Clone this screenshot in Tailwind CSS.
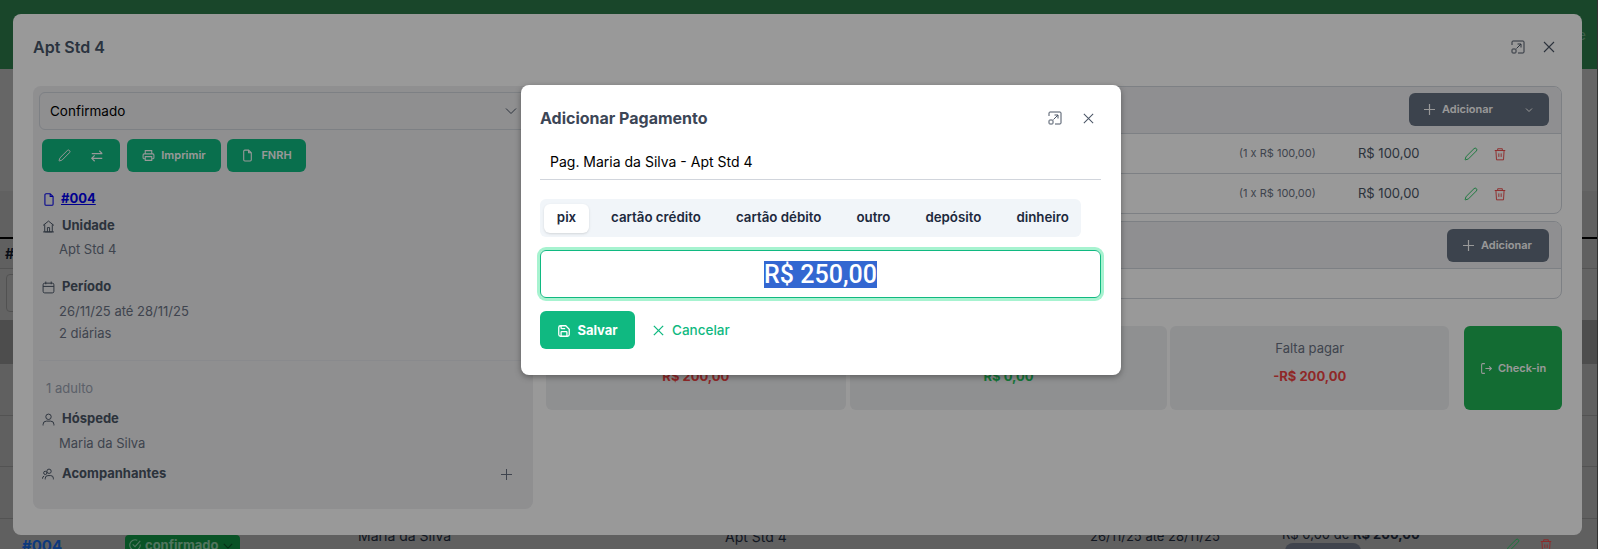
<!DOCTYPE html>
<html lang="pt-BR">
  <head>
    <meta charset="UTF-8">
    <meta name="viewport" content="width=device-width, initial-scale=1.0">
    <script src="https://cdn.jsdelivr.net/npm/@tailwindcss/browser@4"></script>
    <title>Adicionar Pagamento</title>
  </head>
  <body class="h-[549px] overflow-hidden bg-[#aaa] font-['Inter',sans-serif]">
    <!-- página de fundo -->
    <div class="h-[549px] flex flex-col">
      <div class="h-[69px] bg-[#2a7647] flex justify-end items-start pt-[25px] pr-[12px] text-sm text-white/30">Teste</div>
      <div class="h-[122px] bg-[#aaa]"></div>
      <div class="h-[48px] bg-[#a2a2a2] border-b-2 border-black"></div>
      <div class="h-[30px] bg-[#a0a0a0] border-b border-[#8a8a8a] pl-[5px] text-sm font-bold text-gray-900 leading-[30px]">#</div>
      <div class="h-[51px] bg-[#a6a6a6] pl-[6px] pt-[5px]"><div class="w-[30px] h-[38px] rounded border border-[#888]"></div></div>
      <div class="h-[44px] bg-[#808080]"></div>
      <div class="h-[52px] bg-[#a0a0a0] border-b border-[#8a8a8a]"></div>
      <div class="h-[51px] bg-[#a0a0a0] border-b border-[#8a8a8a]"></div>
      <div class="h-[52px] bg-[#a0a0a0] border-b border-[#8a8a8a]"></div>
      <div class="relative flex-1 bg-[#a0a0a0]">
        <a class="absolute left-[22px] top-[16px] text-[15px] font-bold text-[#1660d0]">#004</a>
        <span class="absolute left-[125px] top-[16px] w-[115px] h-[24px] rounded bg-[#0f8a40] pl-[20px] text-[13px] font-bold text-white/50 leading-[21px] flex">
          <svg class="absolute left-[3px] top-[3px] w-[14px] h-[14px]" viewBox="0 0 24 24" fill="none" stroke="currentColor" stroke-width="2"><path d="M21 11v1a9 9 0 1 1-5-8M8 11l4 4 9-10"/></svg>
          confirmado
          <svg class="absolute right-[7px] top-[6px] w-[10px] h-[10px] text-black/40" viewBox="0 0 12 12" fill="none" stroke="currentColor" stroke-width="1.5"><path d="M1 3.5 6 8.5l5-5"/></svg>
        </span>
        <span class="absolute left-[358px] top-[7px] text-sm text-gray-800">Maria da Silva</span>
        <span class="absolute left-[725px] top-[8px] text-sm text-gray-800">Apt Std 4</span>
        <span class="absolute left-[1090px] top-[8px] text-[13px] text-gray-800">26/11/25 até 28/11/25</span>
        <span class="absolute left-[1282px] top-[6px] text-[13px] text-gray-800">R$ 0,00 de <b>R$ 200,00</b></span>
        <span class="absolute left-[1285px] top-[24px] w-[76px] h-[20px] rounded-lg bg-[#6b7280]"></span>
        <svg class="absolute left-[1506px] top-[19px] w-[14px] h-[14px] text-[#22c55e]" viewBox="0 0 24 24" fill="none" stroke="currentColor" stroke-width="1.6"><path d="M21.2 6.8a2.8 2.8 0 0 0-4-4L3.8 16.2a2 2 0 0 0-.5.8l-1.3 4.4a.5.5 0 0 0 .6.6l4.4-1.3a2 2 0 0 0 .8-.5z"/></svg>
        <svg class="absolute left-[1539px] top-[19px] w-[14px] h-[14px] text-[#ef4444]" viewBox="0 0 24 24" fill="none" stroke="currentColor" stroke-width="1.6"><path d="M3 6h18M8 6V3h8v3M5 6l1 16h12l1-16M10 11v6M14 11v6"/></svg>
      </div>
    </div>

    <!-- modal da reserva -->
    <div class="absolute left-[13px] top-[14px] w-[1569px] h-[521px] rounded-lg bg-white px-5 text-gray-600">
      <div class="h-[66px] flex items-center justify-between">
        <h2 class="text-[16px] font-semibold text-[#475569]">Apt Std 4</h2>
        <div class="flex items-center gap-[17px] pr-[6px]">
          <svg class="w-[14px] h-[14px]" viewBox="0 0 14 14" fill="none" stroke="currentColor" stroke-width="1"><path d="M1 5V2a1 1 0 0 1 1-1h10a1 1 0 0 1 1 1v10a1 1 0 0 1-1 1H7M5.5 8.5 10 4M6.5 4H10v3.5"/><rect x="1" y="9" width="4" height="4" rx=".8"/></svg>
          <svg class="w-[14px] h-[14px]" viewBox="0 0 14 14" fill="none" stroke="currentColor" stroke-width="1.1"><path d="M2 2l10 10M12 2 2 12"/></svg>
        </div>
      </div>
      <div class="mt-[6px] flex gap-3">
        <!-- coluna esquerda -->
        <div class="w-[500px] h-[423px] shrink-0 rounded-lg bg-[#eeeef1] p-[6px]">
          <div class="h-[38px] w-[488px] rounded-md border border-gray-300 pl-[10px] pr-[10px] flex items-center justify-between text-[13.5px] text-black">
            Confirmado
            <svg class="w-[12px] h-[12px] mr-[-1px] text-gray-600" viewBox="0 0 12 12" fill="none" stroke="currentColor" stroke-width="1"><path d="M1 3.5 6 8.5l5-5"/></svg>
          </div>
          <div class="ml-[3px] mt-[9px] flex text-white text-[11px] font-semibold">
            <div class="h-[33px] w-[78px] rounded-md bg-[#10b981] flex items-center justify-around px-[6px]">
              <svg class="w-[13px] h-[13px]" viewBox="0 0 24 24" fill="none" stroke="currentColor" stroke-width="1.8"><path d="M21.2 6.8a2.8 2.8 0 0 0-4-4L3.8 16.2a2 2 0 0 0-.5.8l-1.3 4.4a.5.5 0 0 0 .6.6l4.4-1.3a2 2 0 0 0 .8-.5z"/></svg>
              <svg class="w-[14px] h-[14px]" viewBox="0 0 24 24" fill="none" stroke="currentColor" stroke-width="2"><path d="M3 8h18M16 3l5 5M21 16H3M8 11l-5 5 5 5"/></svg>
            </div>
            <div class="ml-[7px] h-[33px] w-[94px] rounded-md bg-[#10b981] flex items-center justify-center gap-[6px]">
              <svg class="w-[13px] h-[13px]" viewBox="0 0 24 24" fill="none" stroke="currentColor" stroke-width="2"><path d="M6 9V3h12v6M6 18H4a2 2 0 0 1-2-2v-5a2 2 0 0 1 2-2h16a2 2 0 0 1 2 2v5a2 2 0 0 1-2 2h-2M6 14h12v7H6z"/></svg>
              Imprimir
            </div>
            <div class="ml-[6px] h-[33px] w-[79px] rounded-md bg-[#10b981] flex items-center justify-center gap-[7px]">
              <svg class="w-[13px] h-[13px]" viewBox="0 0 24 24" fill="none" stroke="currentColor" stroke-width="2"><path d="M14 2H7a2 2 0 0 0-2 2v16a2 2 0 0 0 2 2h10a2 2 0 0 0 2-2V7zM14 2v5h5"/></svg>
              FNRH
            </div>
          </div>
          <a class="mt-[17px] ml-[3px] h-5 flex items-center gap-[5px] text-[13px] font-bold text-[#0000ee] underline">
            <svg class="w-[14px] h-[15px]" viewBox="0 0 24 24" fill="none" stroke="currentColor" stroke-width="1.8"><path d="M14 2H7a2 2 0 0 0-2 2v16a2 2 0 0 0 2 2h10a2 2 0 0 0 2-2V7zM14 2v5h5"/></svg>
            #004
          </a>
          <div class="mt-[7px] ml-[3px] h-5 flex items-center gap-[7px] text-[13px] font-bold text-gray-600">
            <svg class="w-[13px] h-[13px]" viewBox="0 0 24 24" fill="none" stroke="currentColor" stroke-width="1.8"><path d="M2 10 12 2l10 8M5 8v14h14V8M10 22v-8h4v8M2 22h20"/></svg>
            Unidade
          </div>
          <div class="mt-[3px] ml-[20px] h-5 leading-5 text-[13px] text-gray-500">Apt Std 4</div>
          <div class="mt-[18px] ml-[3px] h-5 flex items-center gap-[7px] text-[13px] font-bold text-gray-600">
            <svg class="w-[13px] h-[13px]" viewBox="0 0 24 24" fill="none" stroke="currentColor" stroke-width="1.8"><path d="M7 1v5M17 1v5M2 10h20M5 4h14a3 3 0 0 1 3 3v12a3 3 0 0 1-3 3H5a3 3 0 0 1-3-3V7a3 3 0 0 1 3-3z"/></svg>
            Período
          </div>
          <div class="mt-1 ml-[20px] h-5 leading-5 text-[13px] text-gray-500">26/11/25 até 28/11/25</div>
          <div class="mt-[2px] ml-[20px] h-5 leading-5 text-[13px] text-gray-500">2 diárias</div>
          <div class="mt-[17px] w-[488px] border-t border-gray-200"></div>
          <div class="mt-[17px] ml-[7px] h-5 leading-5 text-[13px] text-gray-400">1 adulto</div>
          <div class="mt-[11px] ml-[3px] h-5 flex items-center gap-[7px] text-[13px] font-bold text-gray-600">
            <svg class="w-[13px] h-[13px]" viewBox="0 0 24 24" fill="none" stroke="currentColor" stroke-width="1.8"><circle cx="12" cy="7" r="5"/><path d="M2 23v-2a6 6 0 0 1 6-6h8a6 6 0 0 1 6 6v2"/></svg>
            Hóspede
          </div>
          <div class="mt-1 ml-[20px] h-5 leading-5 text-[13px] text-gray-500">Maria da Silva</div>
          <div class="mt-[11px] ml-[3px] h-5 flex items-center gap-[7px] text-[13px] font-bold text-gray-600">
            <svg class="w-[13px] h-[13px]" viewBox="0 0 24 24" fill="none" stroke="currentColor" stroke-width="1.8"><circle cx="13" cy="6" r="4"/><circle cx="6" cy="9" r="3"/><path d="M6 21v-2a5 5 0 0 1 5-5h5a5 5 0 0 1 5 5v2M1 20v-1a4 4 0 0 1 3-4"/></svg>
            Acompanhantes
            <svg class="ml-auto mr-[14px] w-[13px] h-[13px] text-gray-500" viewBox="0 0 13 13" fill="none" stroke="currentColor" stroke-width="1"><path d="M6.5 1v11M1 6.5h11"/></svg>
          </div>
        </div>
        <!-- coluna direita -->
        <div class="w-[1017px] shrink-0">
          <div class="h-[128px] rounded-lg border border-gray-300 overflow-hidden">
            <div class="h-[47px] bg-[#eeeff2] border-b border-gray-300 flex justify-end pt-[6px] pr-[12px]">
              <div class="h-[33px] w-[140px] rounded-md bg-[#657080] flex items-center pl-[14px] gap-[6px] text-[11px] font-semibold text-white">
                <svg class="w-[13px] h-[13px]" viewBox="0 0 13 13" fill="none" stroke="currentColor" stroke-width="1.2"><path d="M6.5 1v11M1 6.5h11"/></svg>
                Adicionar
                <svg class="ml-[26px] w-[8px] h-[8px]" viewBox="0 0 8 8" fill="none" stroke="currentColor" stroke-width="1"><path d="M1 2.5 4 5.5l3-3"/></svg>
              </div>
            </div>
            <div class="h-[40px] border-b border-gray-300 flex items-center pl-[693px]">
              <span class="w-[119px] text-[11px] text-gray-500">(1 x R$ 100,00)</span>
              <span class="w-[106px] text-[13px] text-gray-600">R$ 100,00</span>
              <svg class="w-[14px] h-[14px] text-[#22c55e]" viewBox="0 0 24 24" fill="none" stroke="currentColor" stroke-width="1.6"><path d="M21.2 6.8a2.8 2.8 0 0 0-4-4L3.8 16.2a2 2 0 0 0-.5.8l-1.3 4.4a.5.5 0 0 0 .6.6l4.4-1.3a2 2 0 0 0 .8-.5z"/></svg>
              <svg class="ml-[15px] w-[14px] h-[14px] text-[#ef4444]" viewBox="0 0 24 24" fill="none" stroke="currentColor" stroke-width="1.6"><path d="M3 6h18M8 6V3h8v3M5 6l1 16h12l1-16M10 11v6M14 11v6"/></svg>
            </div>
            <div class="h-[39px] flex items-center pl-[693px]">
              <span class="w-[119px] text-[11px] text-gray-500">(1 x R$ 100,00)</span>
              <span class="w-[106px] text-[13px] text-gray-600">R$ 100,00</span>
              <svg class="w-[14px] h-[14px] text-[#22c55e]" viewBox="0 0 24 24" fill="none" stroke="currentColor" stroke-width="1.6"><path d="M21.2 6.8a2.8 2.8 0 0 0-4-4L3.8 16.2a2 2 0 0 0-.5.8l-1.3 4.4a.5.5 0 0 0 .6.6l4.4-1.3a2 2 0 0 0 .8-.5z"/></svg>
              <svg class="ml-[15px] w-[14px] h-[14px] text-[#ef4444]" viewBox="0 0 24 24" fill="none" stroke="currentColor" stroke-width="1.6"><path d="M3 6h18M8 6V3h8v3M5 6l1 16h12l1-16M10 11v6M14 11v6"/></svg>
            </div>
          </div>
          <div class="mt-[7px] h-[78px] rounded-lg border border-gray-300 overflow-hidden">
            <div class="h-[47px] bg-[#eeeff2] border-b border-gray-300 flex justify-end pt-[7px] pr-[12px]">
              <div class="h-[33px] w-[102px] rounded-md bg-[#657080] flex items-center pl-[15px] gap-[6px] text-[11px] font-semibold text-white">
                <svg class="w-[13px] h-[13px]" viewBox="0 0 13 13" fill="none" stroke="currentColor" stroke-width="1.2"><path d="M6.5 1v11M1 6.5h11"/></svg>
                Adicionar
              </div>
            </div>
          </div>
          <div class="mt-[27px] ml-[1px] h-[84px] flex text-center text-[13px]">
            <div class="w-[300px] rounded-md bg-[#eff0f2] pt-3">
              <div class="h-5"></div>
              <div class="mt-2 h-5 leading-5 font-bold text-[#ef4444]">R$ 200,00</div>
            </div>
            <div class="ml-[4px] w-[318px] rounded-md bg-[#eff0f2] pt-3">
              <div class="h-5"></div>
              <div class="mt-2 h-5 leading-5 font-bold text-[#22c55e]">R$ 0,00</div>
            </div>
            <div class="ml-[3px] w-[279px] rounded-md bg-[#eff0f2] pt-3">
              <div class="h-5 leading-5 text-gray-500">Falta pagar</div>
              <div class="mt-2 h-5 leading-5 font-bold text-[#ef4444]">-R$ 200,00</div>
            </div>
            <div class="ml-[15px] w-[98px] rounded-md bg-[#20b455] flex items-center justify-center gap-[5px] text-[11px] font-semibold text-white">
              <svg class="w-[13px] h-[13px]" viewBox="0 0 24 24" fill="none" stroke="currentColor" stroke-width="2"><path d="M9 3H5a2 2 0 0 0-2 2v14a2 2 0 0 0 2 2h4M10 12h11M17 8l4 4-4 4"/></svg>
              Check-in
            </div>
          </div>
        </div>
      </div>
    </div>

    <!-- escurece tudo -->
    <div class="absolute inset-0 bg-black/40"></div>
    <div class="absolute right-0 top-0 w-px h-full bg-[#333]"></div>

    <!-- modal do pagamento -->
    <div class="absolute left-[521px] top-[85px] w-[600px] h-[290px] rounded-lg bg-white shadow-[0_2px_6px_rgba(0,0,0,0.35)] px-[19px]">
      <div class="h-[66px] flex items-center justify-between">
        <h3 class="text-[16px] font-bold text-[#3c4656]">Adicionar Pagamento</h3>
        <div class="flex items-center gap-[20px] pr-[7px] text-gray-600">
          <svg class="w-[14px] h-[14px]" viewBox="0 0 14 14" fill="none" stroke="currentColor" stroke-width="1"><path d="M1 5V2a1 1 0 0 1 1-1h10a1 1 0 0 1 1 1v10a1 1 0 0 1-1 1H7M5.5 8.5 10 4M6.5 4H10v3.5"/><rect x="1" y="9" width="4" height="4" rx=".8"/></svg>
          <svg class="w-[13px] h-[13px]" viewBox="0 0 14 14" fill="none" stroke="currentColor" stroke-width="1.1"><path d="M2 2l10 10M12 2 2 12"/></svg>
        </div>
      </div>
      <div class="h-[29px] w-[561px] border-b border-gray-300 pl-[10px] text-[14px] leading-[21px] text-black">Pag. Maria da Silva - Apt Std 4</div>
      <div class="mt-[19px] w-[541px] h-[38px] rounded-md bg-[#f1f5f9] flex items-center gap-[35px] pl-[4px] text-[13.3px] font-semibold text-slate-800">
        <span class="w-[45px] mr-[-13px] h-[29px] rounded-md bg-white shadow-sm flex items-center justify-center">pix</span>
        <span>cartão crédito</span>
        <span>cartão débito</span>
        <span>outro</span>
        <span>depósito</span>
        <span>dinheiro</span>
      </div>
      <div class="mt-[13px] w-[561px] h-[48px] pt-px rounded-md border-[1.5px] border-[#10b981] ring-[3px] ring-[#a7f3d0] flex items-center justify-center font-['Roboto',sans-serif] font-medium text-[25px]">
        <span class="bg-[#3367d1] text-white leading-[27px]">R$ 250,00</span>
      </div>
      <div class="mt-[13px] flex items-center">
        <div class="w-[95px] h-[38px] pt-px rounded-md bg-[#10b981] flex items-center justify-center gap-[6px] text-[13px] font-bold text-white">
          <svg class="w-[14px] h-[14px]" viewBox="0 0 24 24" fill="none" stroke="currentColor" stroke-width="2.2"><path d="M15 3H6a3 3 0 0 0-3 3v12a3 3 0 0 0 3 3h12a3 3 0 0 0 3-3V9zM17 21v-7a1 1 0 0 0-1-1H8a1 1 0 0 0-1 1v7M7 3v4a1 1 0 0 0 1 1h6"/></svg>
          Salvar
        </div>
        <div class="ml-[17px] pt-px flex items-center gap-[7px] text-[13.5px] font-medium text-[#10b981]">
          <svg class="w-[13px] h-[13px]" viewBox="0 0 14 14" fill="none" stroke="currentColor" stroke-width="1.4"><path d="M2 2l10 10M12 2 2 12"/></svg>
          Cancelar
        </div>
      </div>
    </div>
  </body>
</html>
